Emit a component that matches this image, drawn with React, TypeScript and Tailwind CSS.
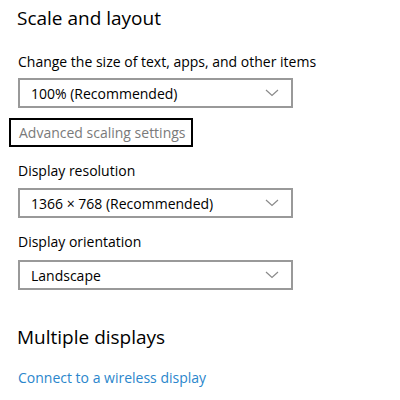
import React from "react";

function Chevron() {
  return (
    <svg width="14" height="8" viewBox="0 0 14 8" className="shrink-0">
      <path d="M1 1 L7 6.5 L13 1" fill="none" stroke="#8a8a8a" strokeWidth="1.2" />
    </svg>
  );
}

function Select({ value }: { value: string }) {
  return (
    <div className="ml-[18px] w-[275px] h-[30px] border-2 border-[#999999] flex items-center justify-between pl-[11px] pr-[12px] text-[14px] text-black">
      <span>{value}</span>
      <Chevron />
    </div>
  );
}

export default function App() {
  return (
    <div
      className="w-[400px] h-[400px] bg-white overflow-hidden text-black"
      style={{ fontFamily: '"Open Sans", "Noto Sans", sans-serif' }}
    >
      <div className="pt-[4px] pl-[17px] text-[19px] leading-[28px]">Scale and layout</div>
      <div className="mt-[20px] pl-[18px] text-[14px] leading-[20px]">Change the size of text, apps, and other items</div>
      <div className="mt-[6px]">
        <Select value="100% (Recommended)" />
      </div>
      <div className="mt-[10px] ml-[9px] w-[184px] h-[29px] border-2 border-black flex items-center pl-[8px] text-[14px] text-[#7a7a7a]">
        Advanced scaling settings
      </div>
      <div className="mt-[14px] pl-[18px] text-[14px] leading-[20px]">Display resolution</div>
      <div className="mt-[7px]">
        <Select value="1366 × 768 (Recommended)" />
      </div>
      <div className="mt-[14px] pl-[18px] text-[14px] leading-[20px]">Display orientation</div>
      <div className="mt-[8px]">
        <Select value="Landscape" />
      </div>
      <div className="mt-[33px] pl-[17px] text-[19px] leading-[28px]">Multiple displays</div>
      <div className="mt-[17px] pl-[18px] text-[14px] leading-[20px] text-[#2a86cc]">Connect to a wireless display</div>
    </div>
  );
}
